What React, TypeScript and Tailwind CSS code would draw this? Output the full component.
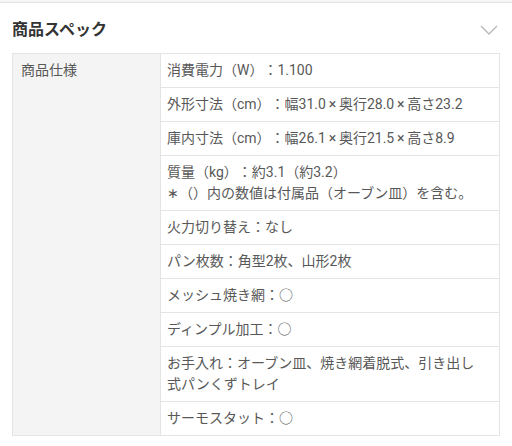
import React from "react";

const rows: string[][] = [
  ["消費電力（W）：1.100"],
  ["外形寸法（cm）：幅31.0×奥行28.0×高さ23.2"],
  ["庫内寸法（cm）：幅26.1×奥行21.5×高さ8.9"],
  ["質量（kg）：約3.1（約3.2）", "∗（）内の数値は付属品（オーブン皿）を含む。"],
  ["火力切り替え：なし"],
  ["パン枚数：角型2枚、山形2枚"],
  ["メッシュ焼き網：○"],
  ["ディンプル加工：○"],
  ["お手入れ：オーブン皿、焼き網着脱式、引き出し", "式パンくずトレイ"],
  ["サーモスタット：○"],
];

function Line({ text }: { text: string }) {
  const parts = text.split("×");
  return (
    <div>
      {parts.map((p, i) => (
        <React.Fragment key={i}>
          {i > 0 && (
            <span className="inline-block w-[13px] text-center">×</span>
          )}
          {p}
        </React.Fragment>
      ))}
    </div>
  );
}

export default function App() {
  return (
    <div
      className="w-[512px] h-[446px] bg-white overflow-hidden [text-spacing-trim:space-all]"
      style={{ fontFamily: "Roboto, 'Noto Sans CJK JP', sans-serif" }}
    >
      <div className="h-[3px] bg-[#f6f6f6] border-b border-[#e2e2e2]" />
      <div className="h-[50px] flex items-center justify-between pl-[12px] pr-[14px] pt-[4px]">
        <span className="text-[16px] font-bold text-[#333] leading-none">商品スペック</span>
        <svg width="18" height="10" viewBox="0 0 18 10" fill="none">
          <path d="M1 1 L9 9 L17 1" stroke="#b8b8b8" strokeWidth="1.4" />
        </svg>
      </div>
      <div className="ml-[12px] w-[488px] flex border-t border-l border-r border-[#e4e4e4] text-[14px] text-[#585858]">
        <div className="w-[148px] shrink-0 bg-[#f4f4f4] border-r border-b border-[#e4e4e4] px-[8px] py-[6px] leading-[21px]">
          商品仕様
        </div>
        <div className="flex-1 flex flex-col">
          {rows.map((r, i) => (
            <div
              key={i}
              className="border-b border-[#e4e4e4] pl-[6px] pr-[4px] py-[6px] leading-[21px] whitespace-nowrap"
            >
              {r.map((l, j) => (
                <Line key={j} text={l} />
              ))}
            </div>
          ))}
        </div>
      </div>
    </div>
  );
}
